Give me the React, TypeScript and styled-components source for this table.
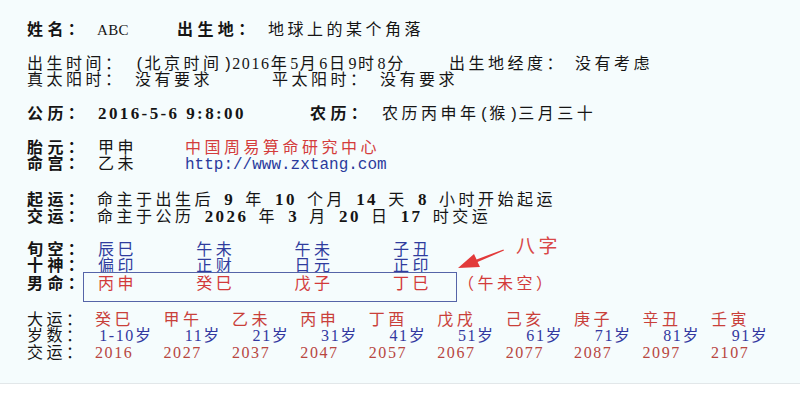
import React from "react";
import styled, { createGlobalStyle } from "styled-components";

const Global = createGlobalStyle`
  html, body { margin: 0; padding: 0; background: #ffffff; }
  body { font-family: "Noto Sans CJK SC", "Liberation Sans", sans-serif; }
`;

const BLUE = "#2f3c9e";
const RED = "#d23a3a";
const LUCK_RED = "#c9403a";
const YEAR_RED = "#b8463f";

const Page = styled.div`
  position: relative;
  box-sizing: border-box;
  height: 384px;
  padding: 20px 0 0 27px;
  background: #f5fcfd;
  border-bottom: 1px solid #e2e7e9;
  color: #151515;
  font-family: "Noto Sans CJK SC", sans-serif;
  font-size: 16px;
  letter-spacing: 3.5px;
  overflow: hidden;
`;

const Section = styled.section<{ $top: number }>`
  display: flex;
  flex-direction: column;
  margin-top: ${(p) => p.$top}px;
`;

const Line = styled.div`
  display: flex;
  align-items: flex-start;
  height: 16.5px;
  line-height: 16.5px;
  white-space: nowrap;
`;

const Label = styled.span<{ $w: number; $bold?: boolean }>`
  flex: 0 0 ${(p) => p.$w}px;
  min-width: 0;
  font-weight: ${(p) => (p.$bold ? 700 : 400)};
  letter-spacing: ${(p) => (p.$bold ? 4.4 : 3.5)}px;
`;

const Value = styled.span<{ $w?: number; $tone?: string }>`
  flex: ${(p) => (p.$w ? `0 0 ${p.$w}px` : "0 0 auto")};
  min-width: 0;
  color: ${(p) => p.$tone ?? "inherit"};
`;

const Num = styled.span<{ $bold?: boolean; $spaced?: boolean }>`
  font-family: "Liberation Serif", serif;
  font-size: ${(p) => (p.$bold ? 17 : 16)}px;
  font-weight: ${(p) => (p.$bold ? 700 : 400)};
  letter-spacing: ${(p) => (p.$bold ? 2.4 : 1.6)}px;
  margin: 0 ${(p) => (p.$spaced ? 10.2 : 0)}px;
`;

const Half = styled.span`
  font-family: "Liberation Mono", monospace;
  letter-spacing: 0;
`;

const Serif = styled.span`
  font-family: "Liberation Serif", serif;
  font-size: 15px;
  letter-spacing: 0.3px;
`;

const Url = styled.span`
  font-family: "Liberation Mono", monospace;
  letter-spacing: 0;
  color: #2a3a9c;
`;

const BoxLine = styled.div`
  display: flex;
  align-items: flex-start;
  margin-top: -1px;
  line-height: 16.5px;
  white-space: nowrap;
`;

const BoxLabel = styled(Label)`
  padding-top: 2px;
`;

const PillarBox = styled.div`
  display: flex;
  box-sizing: border-box;
  flex: 0 0 374px;
  height: 30px;
  padding: 1px 0 0 14px;
  border: 1px solid #5564a8;
`;

const Pillar = styled.span<{ $tone: string; $last?: boolean }>`
  flex: ${(p) => (p.$last ? "1 1 auto" : "0 0 98.3px")};
  min-width: 0;
  color: ${(p) => p.$tone};
`;

const Note = styled.span`
  margin-left: 1px;
  padding-top: 2px;
  color: ${RED};
`;

const LuckCell = styled.span<{ $tone: string; $right?: boolean }>`
  flex: 0 0 68.45px;
  min-width: 0;
  box-sizing: border-box;
  color: ${(p) => p.$tone};
  text-align: ${(p) => (p.$right ? "right" : "left")};
  padding-right: ${(p) => (p.$right ? 9 : 0)}px;
`;

const Tag = styled.span`
  position: absolute;
  left: 516px;
  top: 234px;
  font-size: 19px;
  line-height: 21px;
  letter-spacing: 3.4px;
  color: #d94848;
`;

const Arrow = styled.svg`
  position: absolute;
  left: 450px;
  top: 240px;
`;

const xunkong = ["辰巳", "午未", "午未", "子丑"];
const shishen = ["偏印", "正财", "日元", "正印"];
const pillars = ["丙申", "癸巳", "戊子", "丁巳"];
const dayun = ["癸巳", "甲午", "乙未", "丙申", "丁酉", "戊戌", "己亥", "庚子", "辛丑", "壬寅"];
const ages = ["1-10", "11", "21", "31", "41", "51", "61", "71", "81", "91"];
const years = [2016, 2027, 2037, 2047, 2057, 2067, 2077, 2087, 2097, 2107];

export default function App() {
  return (
    <>
      <Global />
      <Page>
        <Section $top={0}>
          <Line>
            <Label $w={70} $bold>姓名：</Label>
            <Value $w={80}><Serif>ABC</Serif></Value>
            <Label $w={91} $bold>出生地：</Label>
            <Value>地球上的某个角落</Value>
          </Line>
        </Section>

        <Section $top={17}>
          <Line>
            <Label $w={108}>出生时间：</Label>
            <Value $w={314}>
              <Half>(</Half>北京时间<Half>)</Half>
              <Num>2016</Num>年<Num>5</Num>月<Num>6</Num>日<Num>9</Num>时<Num>8</Num>分
            </Value>
            <Label $w={126}>出生地经度：</Label>
            <Value>没有考虑</Value>
          </Line>
          <Line>
            <Label $w={108}>真太阳时：</Label>
            <Value $w={137}>没有要求</Value>
            <Label $w={108}>平太阳时：</Label>
            <Value>没有要求</Value>
          </Line>
        </Section>

        <Section $top={17}>
          <Line>
            <Label $w={71} $bold>公历：</Label>
            <Value $w={212}><Num $bold>2016-5-6 9:8:00</Num></Value>
            <Label $w={72} $bold>农历：</Label>
            <Value>农历丙申年<Half>(</Half>猴<Half>)</Half>三月三十</Value>
          </Line>
        </Section>

        <Section $top={17.5}>
          <Line>
            <Label $w={71} $bold>胎元：</Label>
            <Value $w={87}>甲申</Value>
            <Value $tone="#d43c3c">中国周易算命研究中心</Value>
          </Line>
          <Line>
            <Label $w={71} $bold>命宫：</Label>
            <Value $w={87}>乙未</Value>
            <Value><Url>http://www.zxtang.com</Url></Value>
          </Line>
        </Section>

        <Section $top={19.5}>
          <Line>
            <Label $w={70} $bold>起运：</Label>
            <Value>
              命主于出生后<Num $bold $spaced>9</Num>年<Num $bold $spaced>10</Num>个月<Num $bold $spaced>14</Num>天<Num $bold $spaced>8</Num>小时开始起运
            </Value>
          </Line>
          <Line>
            <Label $w={70} $bold>交运：</Label>
            <Value>
              命主于公历<Num $bold $spaced>2026</Num>年<Num $bold $spaced>3</Num>月<Num $bold $spaced>20</Num>日<Num $bold $spaced>17</Num>时交运
            </Value>
          </Line>
        </Section>

        <Section $top={16.5}>
          <Line>
            <Label $w={71} $bold>旬空：</Label>
            {xunkong.map((t, i) => (
              <Pillar key={i} $tone={BLUE}>{t}</Pillar>
            ))}
          </Line>
          <Line>
            <Label $w={71} $bold>十神：</Label>
            {shishen.map((t, i) => (
              <Pillar key={i} $tone={BLUE}>{t}</Pillar>
            ))}
          </Line>
          <BoxLine>
            <BoxLabel $w={56} $bold>男命：</BoxLabel>
            <PillarBox>
              {pillars.map((t, i) => (
                <Pillar key={i} $tone={RED} $last={i === pillars.length - 1}>{t}</Pillar>
              ))}
            </PillarBox>
            <Note>（午未空）</Note>
          </BoxLine>
        </Section>

        <Section $top={8}>
          <Line>
            <Label $w={68}>大运：</Label>
            {dayun.map((t, i) => (
              <LuckCell key={i} $tone={LUCK_RED}>{t}</LuckCell>
            ))}
          </Line>
          <Line>
            <Label $w={68}>岁数：</Label>
            {ages.map((a, i) => (
              <LuckCell key={i} $tone="#3338a0" $right><Num>{a}</Num>岁</LuckCell>
            ))}
          </Line>
          <Line>
            <Label $w={68}>交运：</Label>
            {years.map((y, i) => (
              <LuckCell key={i} $tone={YEAR_RED}><Num>{y}</Num></LuckCell>
            ))}
          </Line>
        </Section>

        <Tag>八字</Tag>
        <Arrow width="60" height="36" viewBox="0 0 60 36">
          <polygon
            points="8,28 30,27 27.6,22 54,10.6 53.4,9.4 26.6,19.4 24,14"
            fill="#e23a3a"
          />
        </Arrow>
      </Page>
    </>
  );
}
